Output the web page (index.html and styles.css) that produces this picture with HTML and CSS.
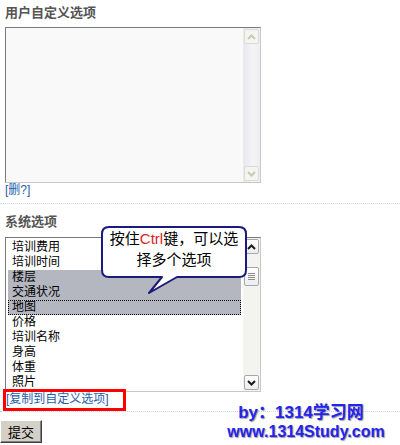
FILE: index.html
```html
<!DOCTYPE html>
<html>
<head>
<meta charset="utf-8">
<link rel="stylesheet" href="styles.css">
</head>
<body>
<div class="page">
  <div class="sec sec-user">
    <div class="label">用户自定义选项</div>
    <div class="box">
      <div class="box-body"></div>
      <div class="sb sb-off">
        <div class="sb-btn"><svg width="9" height="6" viewBox="0 0 9 6"><path d="M1 5 L4.5 1.5 L8 5" fill="none" stroke="#c9c9b9" stroke-width="2"/></svg></div>
        <div class="sb-track"></div>
        <div class="sb-btn"><svg width="9" height="6" viewBox="0 0 9 6"><path d="M1 1 L4.5 4.5 L8 1" fill="none" stroke="#c9c9b9" stroke-width="2"/></svg></div>
      </div>
    </div>
    <a class="link">[删?]</a>
  </div>
  <div class="sep"></div>
  <div class="sec sec-sys">
    <div class="label">系统选项</div>
    <div class="box">
      <ul class="list">
        <li>培训费用</li>
        <li>培训时间</li>
        <li class="sel">楼层</li>
        <li class="sel">交通状况</li>
        <li class="sel focus">地图</li>
        <li>价格</li>
        <li>培训名称</li>
        <li>身高</li>
        <li>体重</li>
        <li>照片</li>
      </ul>
      <div class="sb sb-on">
        <div class="sb-btn"><svg width="9" height="6" viewBox="0 0 9 6"><path d="M1 5 L4.5 1.5 L8 5" fill="none" stroke="#1a1a1a" stroke-width="2"/></svg></div>
        <div class="sb-track">
          <div class="thumb"><span></span><span></span><span></span><span></span></div>
        </div>
        <div class="sb-btn"><svg width="9" height="6" viewBox="0 0 9 6"><path d="M1 1 L4.5 4.5 L8 1" fill="none" stroke="#1a1a1a" stroke-width="2"/></svg></div>
      </div>
    </div>
    <div class="copy"><a class="link">[复制到自定义选项]</a></div>
  </div>
  <div class="sep sep2"></div>
  <button class="submit">提交</button>

  <div class="callout">
    <svg class="bubble" width="150" height="72" viewBox="0 0 150 72">
      <path d="M8 1 H138 Q145 1 145 8 V44 Q145 51 138 51 H76 L48 67 L61 51 H8 Q1 51 1 44 V8 Q1 1 8 1 Z" fill="#fff" stroke="#1b1b7e" stroke-width="2" stroke-linejoin="round"/>
    </svg>
    <div class="callout-text">按住<span class="ctrl">Ctrl</span>键，可以选<br>择多个选项</div>
  </div>

  <div class="brand">
    <div class="b1">by：1314学习网</div>
    <div class="b2">www.1314Study.com</div>
  </div>
</div>
</body>
</html>
```

FILE: styles.css
```css
html, body {
  margin: 0;
  padding: 0;
  background: #fff;
}
body {
  font-family: "Liberation Sans", "Noto Sans CJK SC", sans-serif;
  font-size: 12px;
  color: #000;
}
.page {
  position: relative;
  width: 400px;
  height: 445px;
  overflow: hidden;
}
.sec {
  padding: 0 5px;
}
.sec-user {
  padding-top: 6px;
}
.label {
  font-size: 13px;
  line-height: 14px;
  height: 14px;
  font-weight: bold;
  color: #555;
}
.sec-user .label {
  margin-bottom: 7px;
}
.sec-sys .label {
  margin-top: 11px;
  margin-bottom: 8px;
}
.box {
  width: 256px;
  box-sizing: border-box;
  display: flex;
  border: 1px solid;
  border-color: #7a7a7a #c8c8c8 #c8c8c8 #7a7a7a;
}
.sec-user .box {
  height: 156px;
  background: #f9f9f9;
}
.sec-sys .box {
  height: 155px;
  background: #fff;
}
.box-body {
  flex: 1;
}
.sb {
  width: 17px;
  display: flex;
  flex-direction: column;
  box-sizing: border-box;
  padding: 1px;
}
.sb-off {
  background: linear-gradient(to right, #e6e8f0, #f4f4f8 60%, #eeeef2);
}
.sb-on {
  background: #f3f3f0;
}
.sb-btn {
  width: 15px;
  height: 15px;
  box-sizing: border-box;
  border-radius: 2px;
  display: flex;
  align-items: center;
  justify-content: center;
}
.sb-off .sb-btn {
  background: #f5f5f0;
  border: 1px solid #dcdcd4;
}
.sb-on .sb-btn {
  background: linear-gradient(#ffffff, #ecedf0);
  border: 1px solid #a8a8a8;
}
.sb-track {
  flex: 1;
}
.thumb {
  margin-top: 13px;
  width: 15px;
  height: 19px;
  box-sizing: border-box;
  border: 1px solid #a8a8a8;
  border-radius: 2px;
  background: linear-gradient(#ffffff, #ecedf0);
  display: flex;
  flex-direction: column;
  align-items: center;
  justify-content: center;
  gap: 1px;
}
.thumb span {
  display: block;
  width: 7px;
  height: 1px;
  background: #8e8e8e;
}
.list {
  list-style: none;
  margin: 0;
  padding: 2px 2px 0 2px;
  flex: 1;
  overflow: hidden;
}
.list li {
  height: 15px;
  line-height: 15px;
  padding-left: 4px;
  font-size: 12px;
  color: #000;
  box-sizing: border-box;
}
.list li.sel {
  background: #b4b6c0;
}
.list li.focus {
  outline: 1px dotted #000;
  outline-offset: -1px;
}
.link {
  display: block;
  font-size: 12px;
  line-height: 14px;
  height: 14px;
  color: #1d5ea8;
  text-decoration: none;
}
.copy {
  position: relative;
  margin-top: -1px;
  padding-left: 1px;
}
.copy .link {
  line-height: 16px;
  height: 15px;
}
.copy::after {
  content: "";
  position: absolute;
  left: -2px;
  top: -2px;
  width: 123px;
  height: 22px;
  border: 3px solid #f00;
  box-sizing: border-box;
}
.sep {
  margin-top: 6px;
  height: 0;
  border-top: 1px dotted #c6dcee;
}
.sep2 {
  margin-top: 5px;
}
.submit {
  display: block;
  margin: 8px 0 0 0;
  width: 42px;
  height: 23px;
  padding: 0;
  font-family: "Noto Sans CJK SC", sans-serif;
  font-size: 13px;
  color: #000;
  background: #d4d0c8;
  border: 1px solid;
  border-color: #fff #404040 #404040 #fff;
  box-shadow: inset -1px -1px 0 #808080;
}
.callout {
  position: absolute;
  left: 101px;
  top: 226px;
  width: 150px;
  height: 72px;
}
.bubble {
  position: absolute;
  left: 0;
  top: 0;
}
.callout-text {
  position: absolute;
  left: 6px;
  top: 2px;
  width: 134px;
  text-align: center;
  font-size: 15px;
  line-height: 20px;
  color: #000;
  font-family: "Noto Sans CJK SC", sans-serif;
}
.ctrl {
  color: #d8261c;
  font-family: "Liberation Sans", sans-serif;
}
.brand {
  position: absolute;
  left: 212px;
  top: 403px;
  width: 188px;
  text-align: center;
  font-family: "Liberation Sans", "Noto Sans CJK SC", sans-serif;
  font-weight: bold;
  color: #2424f0;
  text-shadow: 1px 1px 1px #9a9a9a;
}
.b1 {
  font-size: 17px;
  line-height: 20px;
  padding-right: 10px;
}
.b2 {
  font-size: 16px;
  line-height: 18px;
}
```
